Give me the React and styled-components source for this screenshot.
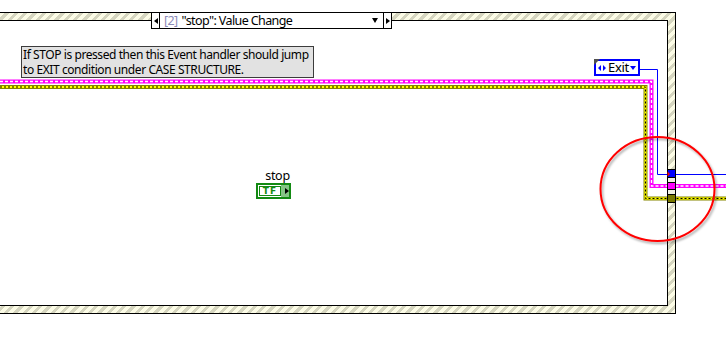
import React from 'react'
import styled, { createGlobalStyle } from 'styled-components'

const GlobalStyle = createGlobalStyle`
  html, body {
    margin: 0;
    padding: 0;
    background: #fff;
  }
`

const Diagram = styled.div`
  position: relative;
  width: 726px;
  height: 357px;
  overflow: hidden;
  background: #fff;
  font-family: "Noto Sans", "DejaVu Sans", sans-serif;
  color: #000;
`

const Structure = styled.div`
  position: absolute;
  left: -20px;
  top: 12px;
  width: 696px;
  height: 302px;
  box-sizing: border-box;
  border: 1px solid #000;
  padding: 7px;
  background: repeating-linear-gradient(
    135deg,
    #fcfce6 0px,
    #fcfce6 3.6px,
    #d6d6c0 3.6px,
    #d6d6c0 6.6px
  );
`

const StructureInner = styled.div`
  height: 100%;
  box-sizing: border-box;
  border: 1px solid #000;
  background: #fff;
`

const Selector = styled.div`
  position: absolute;
  left: 151px;
  top: 12px;
  width: 241px;
  height: 17px;
  box-sizing: border-box;
  border: 1px solid #000;
  background: #fff;
  display: flex;
  align-items: stretch;
`

const StepCell = styled.div`
  width: 7px;
  display: flex;
  align-items: center;
  justify-content: center;
  border-${p => (p.$side === 'left' ? 'right' : 'left')}: 1px solid #000;
`

const Tri = styled.span`
  width: 0;
  height: 0;
  border-top: 3px solid transparent;
  border-bottom: 3px solid transparent;
  ${p => (p.$dir === 'left' ? 'border-right: 4px solid #000;' : 'border-left: 4px solid #000;')}
`

const SelectorText = styled.div`
  flex: 1;
  display: flex;
  align-items: center;
  padding-left: 4px;
  font-size: 12.5px;
  letter-spacing: -0.6px;
  white-space: nowrap;
`

const CaseIndex = styled.span`
  color: #8c8cb8;
  margin-right: 4px;
`

const DropArrow = styled.span`
  width: 0;
  height: 0;
  margin: 0 5px 0 auto;
  border-left: 3.5px solid transparent;
  border-right: 3.5px solid transparent;
  border-top: 5px solid #000;
`

const Comment = styled.div`
  position: absolute;
  left: 21px;
  top: 46px;
  width: 293px;
  height: 32px;
  box-sizing: border-box;
  border: 1px solid #3c3c3c;
  background: #e2e2e2;
  padding: 0 1px;
  display: flex;
  flex-direction: column;
  font-size: 12px;
  letter-spacing: -0.42px;
  white-space: nowrap;
  overflow: hidden;
`

const CommentLine = styled.span`
  display: block;
  height: 15px;
  line-height: 15px;
`

const EnumConst = styled.div`
  position: absolute;
  left: 594px;
  top: 59px;
  width: 46px;
  height: 17px;
  box-sizing: border-box;
  border: 2px solid #0000ff;
  background: #fff;
  display: flex;
  align-items: center;
  padding-left: 2px;
  font-size: 13px;
  letter-spacing: -0.3px;

  &::before {
    content: '';
    position: absolute;
    left: -2px;
    top: -2px;
    border-top: 6px solid #505050;
    border-right: 6px solid transparent;
  }
`

const EnumLabel = styled.span`
  margin-left: 2px;
  line-height: 13px;
`

const EnumDrop = styled.span`
  width: 0;
  height: 0;
  margin: 0 2px 0 auto;
  border-left: 3.5px solid transparent;
  border-right: 3.5px solid transparent;
  border-top: 4px solid #0000ff;
`

const Terminal = styled.div`
  position: absolute;
  left: 256px;
  top: 168px;
  display: flex;
  flex-direction: column;
  align-items: center;
`

const TermLabel = styled.span`
  font-size: 12.5px;
  letter-spacing: -0.3px;
  line-height: 15px;
  margin-left: 8px;
`

const BoolBox = styled.div`
  width: 35px;
  height: 16px;
  box-sizing: border-box;
  border: 2px solid #138a13;
  background: #fff;
  display: flex;
  padding: 1px 0 1px 1px;
`

const BoolField = styled.div`
  flex: 1;
  border: 1px solid #138a13;
  display: flex;
  align-items: center;
  justify-content: center;
  font-family: "DejaVu Sans", sans-serif;
  font-size: 9px;
  font-weight: bold;
  color: #138a13;
  letter-spacing: 1px;
  line-height: 8px;
`

const BoolOut = styled.div`
  width: 8px;
  margin: -1px 0;
  background: #86c486;
  display: flex;
  align-items: center;
  justify-content: flex-end;
`

const OutTri = styled.span`
  width: 0;
  height: 0;
  border-top: 3px solid transparent;
  border-bottom: 3px solid transparent;
  border-left: 4px solid #000;
`

const Overlay = styled.svg`
  position: absolute;
  left: 0;
  top: 0;
  pointer-events: none;
`

function Wires() {
  return (
    <Overlay width="726" height="357" viewBox="0 0 726 357">
      {/* string wire */}
      <path d="M0 81.5 H651.5 V186 H726" fill="none" stroke="#ff00ff" strokeWidth="4" />
      <path d="M0 81.5 H651.5 V186 H726" fill="none" stroke="#fff" strokeWidth="1.3" strokeDasharray="3 2" />
      {/* error cluster wire */}
      <path d="M0 87 H645.5 V198.5 H726" fill="none" stroke="#868600" strokeWidth="4" />
      <path d="M0 87 H645.5 V198.5 H726" fill="none" stroke="#ffff00" strokeWidth="2" />
      <path d="M0 87 H645.5 V198.5 H726" fill="none" stroke="#000" strokeWidth="1" strokeDasharray="2 2" />
      {/* enum wire */}
      <path d="M640 69.5 H657.5 V174.5 H726" fill="none" stroke="#0000ff" strokeWidth="1" />
      {/* tunnels */}
      <rect x="667.5" y="169.5" width="8" height="33" fill="#f2f2e2" stroke="#000" />
      <rect x="667.5" y="169.5" width="8" height="8" fill="#0000ff" stroke="#000" />
      <path d="M667.5 171.5 L670 174 L667.5 176.5 Z" fill="#ff0000" />
      <rect x="667.5" y="182.5" width="8" height="7" fill="#ff00ff" stroke="#000" />
      <rect x="667.5" y="194.5" width="8" height="8" fill="#7a7a00" stroke="#000" />
    </Overlay>
  )
}

function Highlight() {
  return (
    <Overlay width="726" height="357" viewBox="0 0 726 357">
      <defs>
        <filter id="shade" x="-20%" y="-20%" width="140%" height="140%">
          <feDropShadow dx="1.5" dy="2" stdDeviation="1.2" floodColor="#000" floodOpacity="0.35" />
        </filter>
      </defs>
      <ellipse cx="657.5" cy="189" rx="57" ry="52" fill="none" stroke="#ff0000" strokeWidth="2" filter="url(#shade)" />
    </Overlay>
  )
}

function EnumArrows() {
  return (
    <svg width="8" height="6" viewBox="0 0 8 6">
      <path d="M0 3 L3 0 V6 Z M8 3 L5 0 V6 Z" fill="#0000ff" />
    </svg>
  )
}

export default function App() {
  return (
    <Diagram>
      <GlobalStyle />
      <Structure>
        <StructureInner />
      </Structure>
      <Selector>
        <StepCell $side="left"><Tri $dir="left" /></StepCell>
        <SelectorText>
          <CaseIndex>[2]</CaseIndex>"stop": Value Change
          <DropArrow />
        </SelectorText>
        <StepCell $side="right"><Tri $dir="right" /></StepCell>
      </Selector>
      <Comment>
        <CommentLine>If STOP is pressed then this Event handler should jump</CommentLine>
        <CommentLine>to EXIT condition under CASE STRUCTURE.</CommentLine>
      </Comment>
      <Wires />
      <EnumConst>
        <EnumArrows />
        <EnumLabel>Exit</EnumLabel>
        <EnumDrop />
      </EnumConst>
      <Terminal>
        <TermLabel>stop</TermLabel>
        <BoolBox>
          <BoolField>TF</BoolField>
          <BoolOut><OutTri /></BoolOut>
        </BoolBox>
      </Terminal>
      <Highlight />
    </Diagram>
  )
}
